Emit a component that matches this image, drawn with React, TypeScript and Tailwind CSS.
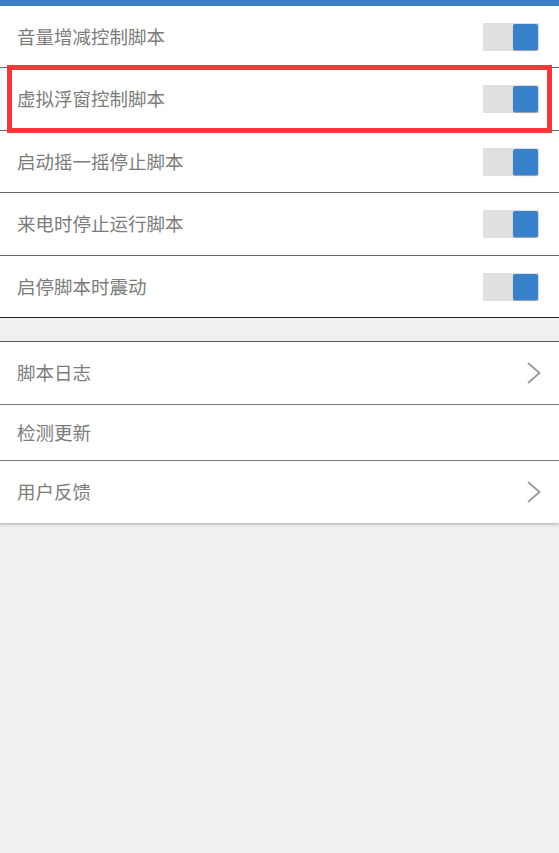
import React from 'react';

const toggleRows = [
  { label: '音量增减控制脚本', h: 'h-[62px]' },
  { label: '虚拟浮窗控制脚本', h: 'h-[63px]' },
  { label: '启动摇一摇停止脚本', h: 'h-[62px]' },
  { label: '来电时停止运行脚本', h: 'h-[63px]' },
  { label: '启停脚本时震动', h: 'h-[62px]' },
];

const Toggle: React.FC = () => (
  <div className="w-[56px] h-[28px] bg-[#e0e0e0] flex items-center justify-end pr-[1px]">
    <div className="w-[25px] h-[26px] bg-[#3a81cc] rounded-[2px] shadow-[0_1px_1px_rgba(0,0,0,0.3)]" />
  </div>
);

const Chevron: React.FC = () => (
  <svg width="16" height="24" viewBox="0 0 16 24" className="block">
    <polyline points="2,2 13.5,12 2,22" fill="none" stroke="#9a9a9a" strokeWidth="1.8" />
  </svg>
);

const App: React.FC = () => {
  return (
    <div
      className="relative w-[559px] h-[853px] bg-[#f0f0f0] overflow-hidden"
      style={{ fontFamily: '"Noto Sans CJK SC", "Noto Sans", sans-serif' }}
    >
      {/* top bar */}
      <div className="h-[6px] bg-[#3b7cc6]" />

      {/* toggle section */}
      <div className="bg-white">
        {toggleRows.map((row, i) => (
          <div
            key={row.label}
            className={`${row.h} flex items-center justify-between pl-[17px] pr-[20px] border-b ${
              i === toggleRows.length - 1 ? 'border-[#222222]' : 'border-[#666666]'
            }`}
          >
            <span className="text-[18.5px] text-[#7c7c7c]">{row.label}</span>
            <Toggle />
          </div>
        ))}
      </div>

      <div className="h-[23px]" />

      {/* link section */}
      <div className="bg-white border-t border-[#555555] shadow-[0_2px_2px_rgba(0,0,0,0.18)]">
        <div className="h-[63px] flex items-center justify-between pl-[17px] pr-[17px] border-b border-[#777777]">
          <span className="text-[18.5px] text-[#7c7c7c]">脚本日志</span>
          <Chevron />
        </div>
        <div className="h-[56px] flex items-center pl-[17px] border-b border-[#777777]">
          <span className="text-[18.5px] text-[#7c7c7c]">检测更新</span>
        </div>
        <div className="h-[62px] flex items-center justify-between pl-[17px] pr-[17px]">
          <span className="text-[18.5px] text-[#7c7c7c]">用户反馈</span>
          <Chevron />
        </div>
      </div>

      {/* highlight annotation */}
      <div className="absolute left-[7px] top-[65px] w-[545px] h-[68px] border-[5px] border-[#f5363a] pointer-events-none" />
    </div>
  );
};

export default App;
